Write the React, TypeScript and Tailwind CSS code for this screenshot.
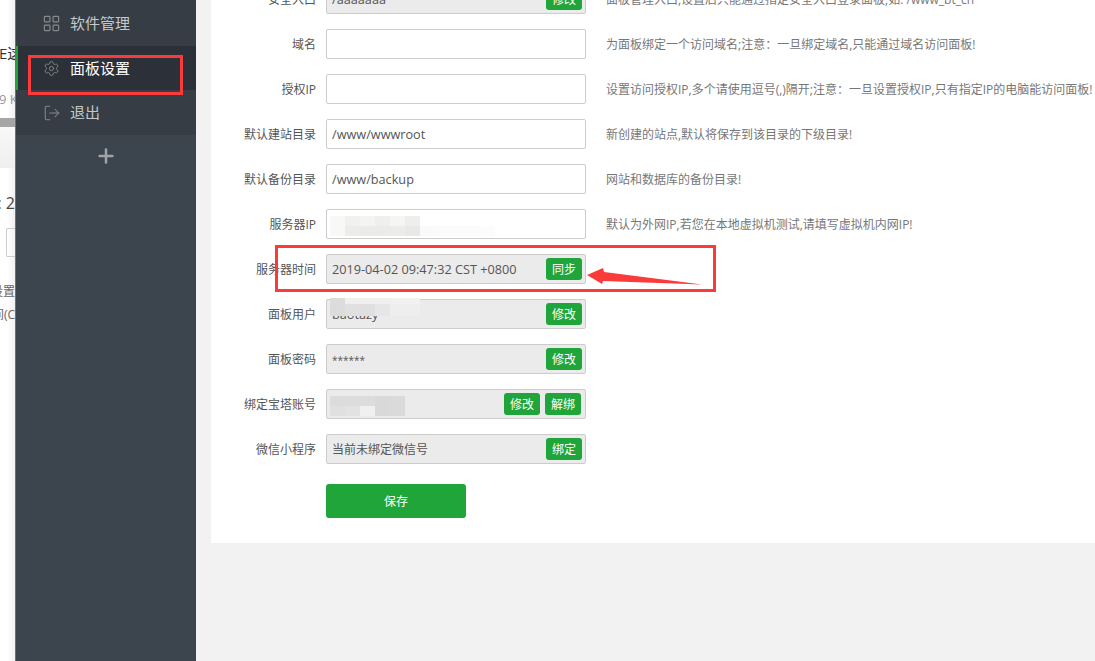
import { LayoutGrid, Settings, LogOut, Plus } from "lucide-react";

type Row = {
  label: string;
  value?: string;
  disabled?: boolean;
  buttons?: string[];
  hint?: string;
  hintClass?: string;
  valueClass?: string;
  blur?: string[][];
  blurClass?: string;
  blurCell?: string;
};

const rows: Row[] = [
  { label: "安全入口", value: "/aaaaaaa", disabled: true, buttons: ["修改"], hint: "面板管理入口,设置后只能通过指定安全入口登录面板,如: /www_bt_cn", hintClass: "-ml-[4px]" },
  { label: "域名", hint: "为面板绑定一个访问域名;注意：一旦绑定域名,只能通过域名访问面板!" },
  { label: "授权IP", hint: "设置访问授权IP,多个请使用逗号(,)隔开;注意：一旦设置授权IP,只有指定IP的电脑能访问面板!" },
  { label: "默认建站目录", value: "/www/wwwroot", hint: "新创建的站点,默认将保存到该目录的下级目录!" },
  { label: "默认备份目录", value: "/www/backup", hint: "网站和数据库的备份目录!" },
  {
    label: "服务器IP",
    hint: "默认为外网IP,若您在本地虚拟机测试,请填写虚拟机内网IP!",
    blurClass: "left-[3px] top-[6px]",
    blurCell: "w-[15px] h-[10px]",
    blur: [
      ["#f8f8f7", "#f1f1f0", "#f4f4f3", "#efefee", "#f5f5f3", "#eeeeec", "#ffffff", "#ffffff", "#ffffff", "#ffffff", "#ffffff"],
      ["#f8f8f7", "#ececeb", "#ebebea", "#ebebea", "#ecece9", "#e8e8e6", "#fafafa", "#fbfbfb", "#fbfbfb", "#fbfbfb", "#fcfcfc"],
    ],
  },
  { label: "服务器时间", value: "2019-04-02 09:47:32 CST +0800", disabled: true, buttons: ["同步"] },
  {
    label: "面板用户",
    value: "baotazy",
    disabled: true,
    buttons: ["修改"],
    blurClass: "left-[3px] -top-[2px]",
    blurCell: "w-[15px] h-[6px]",
    blur: [
      ["#dcdcdc", "#f0f0f0", "#f0f0f0", "#f0f0f0", "#f1f1f1", "#f1f1f1"],
      ["#dcdcdc", "#e0e0e0", "#dfdfdf", "#e6e6e6", "#eeeeee", "#eeeeee"],
      ["#dcdcdc", "#e0e0e0", "#dfdfdf", "#e6e6e6", "#eeeeee", "#eeeeee"],
    ],
  },
  { label: "面板密码", value: "******", valueClass: "text-[10px] leading-none", disabled: true, buttons: ["修改"] },
  {
    label: "绑定宝塔账号",
    disabled: true,
    buttons: ["修改", "解绑"],
    blurClass: "left-[3px] top-[6px]",
    blurCell: "w-[15px] h-[10px]",
    blur: [
      ["#dcdcdc", "#dcdcdc", "#dcdcdc", "#d9d9d9", "#dadada"],
      ["#e0e0e0", "#e2e2e2", "#f0f0f0", "#d9d9d9", "#dadada"],
    ],
  },
  { label: "微信小程序", value: "当前未绑定微信号", valueClass: "text-[12px]", disabled: true, buttons: ["绑定"] },
];

const NavItem = ({ icon, text, active, tall }: { icon: React.ReactNode; text: string; active?: boolean; tall?: boolean }) => (
  <div
    className={
      active
        ? "h-[44px] flex items-center bg-[#2c3038] border-l-[2px] border-[#20a53a] pl-[26px] text-white"
        : `${tall ? "h-[46px]" : "h-[45px]"} flex items-center bg-[#363d45] pl-[28px] text-[#c6c8ca]`
    }
  >
    <span className="w-[15px] h-[15px] flex items-center justify-center text-[#85898e]">{icon}</span>
    <span className="ml-[11px] text-[15px] leading-none">{text}</span>
  </div>
);

const GreenButton = ({ text }: { text: string }) => (
  <span className="h-[22px] w-[36px] pt-[1px] flex items-center justify-center rounded-[3px] bg-[#20a53a] text-white text-[12px]">
    {text}
  </span>
);

const FormRow = ({ row }: { row: Row }) => (
  <div className="h-[30px] flex items-center">
    <div className="w-[105px] pt-[1px] text-right text-[12px] text-[#555555]">{row.label}</div>
    <div
      className={`relative ml-[10px] w-[260px] h-[30px] flex items-center justify-between pl-[5px] pr-[3px] border border-[#cccccc] rounded-[2px] ${
        row.disabled ? "bg-[#ebebeb]" : "bg-white"
      }`}
    >
      <span className={`pt-[1px] text-[#555555] whitespace-nowrap ${row.valueClass ?? "text-[12.7px]"}`}>{row.value}</span>
      {row.buttons && (
        <span className={`flex gap-[5px] ${row.buttons.length > 1 ? "mr-[1px]" : ""}`}>
          {row.buttons.map((b) => (
            <GreenButton key={b} text={b} />
          ))}
        </span>
      )}
      {row.blur && (
        <div className={`absolute flex flex-col ${row.blurClass}`}>
          {row.blur.map((line, i) => (
            <div key={i} className="flex">
              {line.map((c, j) => (
                <div key={j} className={row.blurCell} style={{ backgroundColor: c }} />
              ))}
            </div>
          ))}
        </div>
      )}
    </div>
    {row.hint && (
      <div className={`ml-[20px] pt-[1px] text-[12px] text-[#777777] whitespace-nowrap ${row.hintClass ?? ""}`}>{row.hint}</div>
    )}
  </div>
);

export default function App() {
  return (
    <div
      className="relative flex w-[1095px] h-[661px] overflow-hidden bg-[#f2f2f2]"
      style={{ fontFamily: '"Open Sans", "Noto Sans CJK SC", sans-serif' }}
    >
      {/* page behind the sidebar, only a sliver shows */}
      <div className="w-[15px] shrink-0 h-full overflow-hidden bg-gradient-to-r from-white via-white to-[#f0f0f0] flex flex-col items-end">
        <div className="h-[46px]" />
        <div className="self-start -ml-[1px] h-[15px] text-[15px] leading-[15px] text-[#333333] whitespace-nowrap">E这</div>
        <div className="h-[31px]" />
        <div className="self-start -ml-[1px] h-[14px] text-[13px] leading-[14px] text-[#999999] whitespace-nowrap">9 K</div>
        <div className="h-[12px]" />
        <div className="h-[9px] w-full bg-[#a6a6a6]" />
        <div className="w-full h-[41px] bg-gradient-to-b from-[#f8f8f8] to-[#efefef]" />
        <div className="h-[26px]" />
        <div className="h-[18px] text-[16px] leading-[18px] text-[#444444] whitespace-nowrap">: 2</div>
        <div className="h-[16px]" />
        <div className="w-[9px] h-[29px] border border-r-0 border-[#cccccc] rounded-l-[2px]" />
        <div className="h-[28px]" />
        <div className="h-[14px] text-[12px] leading-[14px] text-[#666666] whitespace-nowrap">设置</div>
        <div className="h-[9px]" />
        <div className="h-[14px] text-[12px] leading-[14px] text-[#666666] whitespace-nowrap">间(C</div>
      </div>
      <div className="w-px shrink-0 h-full bg-[#2a82c9]" />

      <aside className="w-[180px] shrink-0 h-full bg-[#3c444d]">
        <NavItem icon={<LayoutGrid className="shrink-0" size={19} strokeWidth={1.5} />} text="软件管理" tall />
        <NavItem icon={<Settings className="shrink-0" size={17} strokeWidth={1.3} />} text="面板设置" active />
        <NavItem icon={<LogOut className="shrink-0" size={18} strokeWidth={1.4} />} text="退出" />
        <div className="h-[42px] flex items-center justify-center text-[#a0a4a8]">
          <Plus size={22} strokeWidth={2.7} />
        </div>
      </aside>

      <main className="ml-[15px] w-[884px] h-[543px] bg-white overflow-hidden shrink-0">
        <div className="-mt-[16px] flex flex-col gap-[15px]">
          {rows.map((r) => (
            <FormRow key={r.label} row={r} />
          ))}
          <button className="mt-[5px] ml-[115px] w-[140px] h-[34px] pt-[1px] rounded-[3px] bg-[#20a53a] text-white text-[12px]">
            保存
          </button>
        </div>
      </main>

      {/* annotations */}
      <div className="absolute left-[28px] top-[55px] w-[155px] h-[40px] border-[3px] border-[#fb3a3a]" />
      <div className="absolute left-[275px] top-[245px] w-[441px] h-[47px] border-[3px] border-[#fb3a3a]" />
      <svg className="absolute left-[585px] top-[265px]" width="125" height="24" viewBox="0 0 125 24">
        <path d="M2 10 L18 3 L19 7 L117 19.5 L18 16 L17 19 Z" fill="#fb3a3a" />
      </svg>
    </div>
  );
}
